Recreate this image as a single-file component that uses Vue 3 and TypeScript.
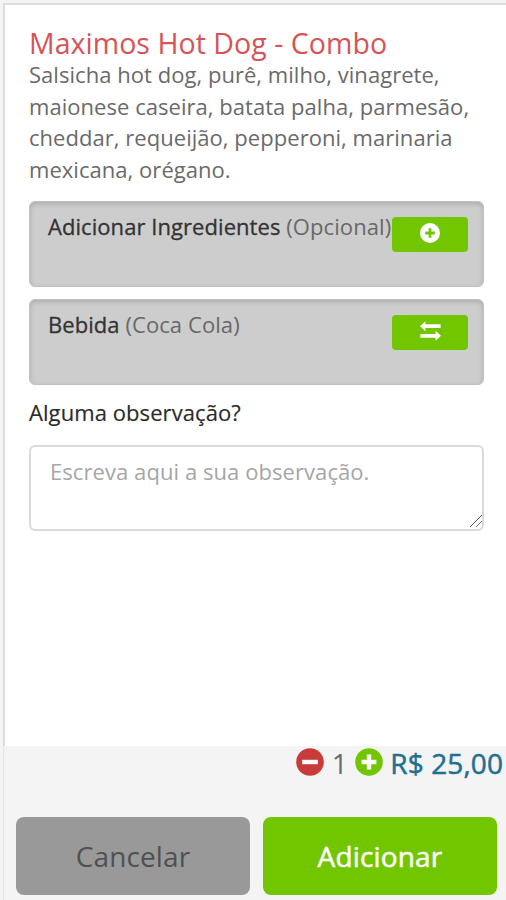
<script setup lang="ts">
import { ref, computed } from 'vue'

const note = ref('')
const quantity = ref(1)
const unitPrice = 25
const total = computed(() => 'R$ ' + (unitPrice * quantity.value).toFixed(2).replace('.', ','))

function decrease(): void {
  if (quantity.value > 1) quantity.value--
}
</script>

<template>
  <div class="modal">
    <main class="content">
      <h1 class="title">Maximos Hot Dog - Combo</h1>
      <p class="description">Salsicha hot dog, purê, milho, vinagrete,<br>maionese caseira, batata palha, parmesão,<br>cheddar, requeijão, pepperoni, marinaria<br>mexicana, orégano.</p>

      <section class="option">
        <p class="option-label"><strong>Adicionar Ingredientes</strong> <span>(Opcional)</span></p>
        <button class="option-button" type="button" aria-label="Adicionar ingredientes">
          <svg class="plus-icon" viewBox="0 0 20 20"><path fill="#fff" fill-rule="evenodd" d="M10 0a10 10 0 1 1 0 20a10 10 0 0 1 0-20ZM8.6 5.2v3.4H5.2v2.8h3.4v3.4h2.8v-3.4h3.4V8.6h-3.4V5.2Z" /></svg>
        </button>
      </section>
      <section class="option">
        <p class="option-label"><strong>Bebida</strong> <span>(Coca Cola)</span></p>
        <button class="option-button" type="button" aria-label="Trocar bebida">
          <svg class="swap-icon" viewBox="0 0 21 20"><path fill="#fff" d="M0 5.2 5.4.2V3.3H20.6V7.1H5.4V10.2ZM21 14.8 15.6 9.8V12.9H.4V16.7H15.6V19.8Z" /></svg>
        </button>
      </section>

      <label class="note-label" for="note">Alguma observação?</label>
      <div class="note-box">
        <textarea id="note" v-model="note" class="note" placeholder="Escreva aqui a sua observação."></textarea>
        <svg class="grip" viewBox="0 0 14 14"><path d="M1 13 13 1" stroke="#555" /><path d="M7 13 13 7" stroke="#777" /></svg>
      </div>
    </main>

    <footer class="footer">
      <div class="summary">
        <button class="round" type="button" aria-label="Diminuir" @click="decrease">
          <svg viewBox="0 0 28 28"><circle cx="14" cy="14" r="13.8" fill="#c83b3b" /><path fill="#fff" d="M6.2 11.8h15.6v4.4H6.2z" /></svg>
        </button>
        <span class="quantity">{{ quantity }}</span>
        <button class="round" type="button" aria-label="Aumentar" @click="quantity++">
          <svg viewBox="0 0 28 28"><circle cx="14" cy="14" r="13.8" fill="#71c600" /><path fill="#fff" d="M11.8 6.6h4.4v5.2h5.2v4.4h-5.2v5.2h-4.4v-5.2H6.6v-4.4h5.2z" /></svg>
        </button>
        <strong class="total">{{ total }}</strong>
      </div>
      <div class="actions">
        <button class="action cancel" type="button"><span>Cancelar</span></button>
        <button class="action add" type="button"><span>Adicionar</span></button>
      </div>
    </footer>
  </div>
</template>

<style>
body {
  overflow: hidden;
  background: #f4f4f4;
}
</style>

<style scoped>
.modal {
  box-sizing: border-box;
  width: 506px;
  height: 900px;
  padding-top: 3px;
  display: flex;
  flex-direction: column;
  background: #f4f4f4;
  font-family: "Open Sans", sans-serif;
  font-weight: 400;
  font-size: 22px;
  color: #6a6a6a;
}
.content {
  box-sizing: border-box;
  height: 743px;
  margin-left: 3px;
  padding: 23px 21px 0 24px;
  border-left: 2px solid #dcdcdc;
  border-top: 2px solid #dcdcdc;
  background: #fff;
}
.title {
  margin: 0;
  height: 31px;
  font-size: 28.5px;
  line-height: 30px;
  font-weight: 400;
  letter-spacing: 0.04px;
  color: #d65456;
  white-space: nowrap;
}
.description {
  margin: 0;
  height: 126px;
  line-height: 31.5px;
  letter-spacing: 0.04px;
  white-space: nowrap;
}
.option {
  box-sizing: border-box;
  width: 455px;
  height: 86px;
  margin: 16px 0 12px;
  padding: 15px 15px 0 18px;
  display: flex;
  justify-content: space-between;
  border: 1px solid #c0c0c0;
  border-radius: 6px;
  background: #cdcdcd;
  box-shadow: inset 0 2px 5px rgba(0, 0, 0, 0.16);
}
.option + .option {
  margin-top: 12px;
}
.option-label {
  margin: -6px 0 0;
  width: 344px;
  line-height: 31px;
  letter-spacing: 0.08px;
  white-space: nowrap;
  color: #686868;
}
.option-label strong {
  font-weight: 400;
  letter-spacing: 0.06px;
  color: #333;
  -webkit-text-stroke: 0.3px #333;
}
.option-button {
  width: 76px;
  height: 35px;
  flex: none;
  padding: 0 0 3px;
  display: flex;
  align-items: center;
  justify-content: center;
  border: 0;
  border-radius: 4px;
  background: #71c600;
}
.plus-icon {
  width: 20px;
  height: 20px;
}
.swap-icon {
  width: 21px;
  height: 20px;
}
.note-label {
  display: block;
  height: 31px;
  margin-bottom: 17px;
  line-height: 31px;
  letter-spacing: 0.08px;
  color: #2a2a2a;
  -webkit-text-stroke: 0.15px #2a2a2a;
}
.note-box {
  position: relative;
  width: 455px;
  height: 86px;
}
.note {
  box-sizing: border-box;
  display: block;
  width: 100%;
  height: 100%;
  padding: 9px 18px 9px 19px;
  border: 2px solid #dadada;
  border-radius: 6px;
  outline: 0;
  resize: none;
  overflow: hidden;
  background: #fff;
  font: inherit;
  letter-spacing: 0.07px;
  line-height: 31px;
}
.note::placeholder {
  color: #a6a6a6;
  opacity: 1;
}
.grip {
  position: absolute;
  right: 1px;
  bottom: 3px;
  width: 14px;
  height: 14px;
}
.footer {
  flex: 1;
  margin-left: 3px;
  border-left: 1px solid #e6e6e6;
}
.summary {
  height: 71px;
  display: flex;
  justify-content: flex-end;
  padding-right: 3px;
  line-height: 34px;
}
.round {
  width: 28px;
  height: 28px;
  margin-top: 2px;
  padding: 0;
  border: 0;
  background: none;
}
.round svg {
  display: block;
  width: 28px;
  height: 28px;
}
.quantity {
  width: 31px;
  text-align: center;
  font-size: 28px;
}
.total {
  margin-left: 7px;
  font-size: 28px;
  font-weight: 400;
  letter-spacing: 0.1px;
  color: #21708f;
  -webkit-text-stroke: 0.5px #21708f;
}
.actions {
  display: flex;
  gap: 13px;
  padding-left: 12px;
}
.action {
  width: 234px;
  height: 78px;
  padding: 0;
  border: 0;
  border-radius: 8px;
  font: inherit;
  font-size: 28px;
  line-height: 78px;
}
.cancel {
  background: #999;
  color: #505050;
  letter-spacing: 0.1px;
}
.add {
  background: #71c600;
  color: #fff;
  letter-spacing: 0.15px;
  -webkit-text-stroke: 0.5px #fff;
}
</style>
